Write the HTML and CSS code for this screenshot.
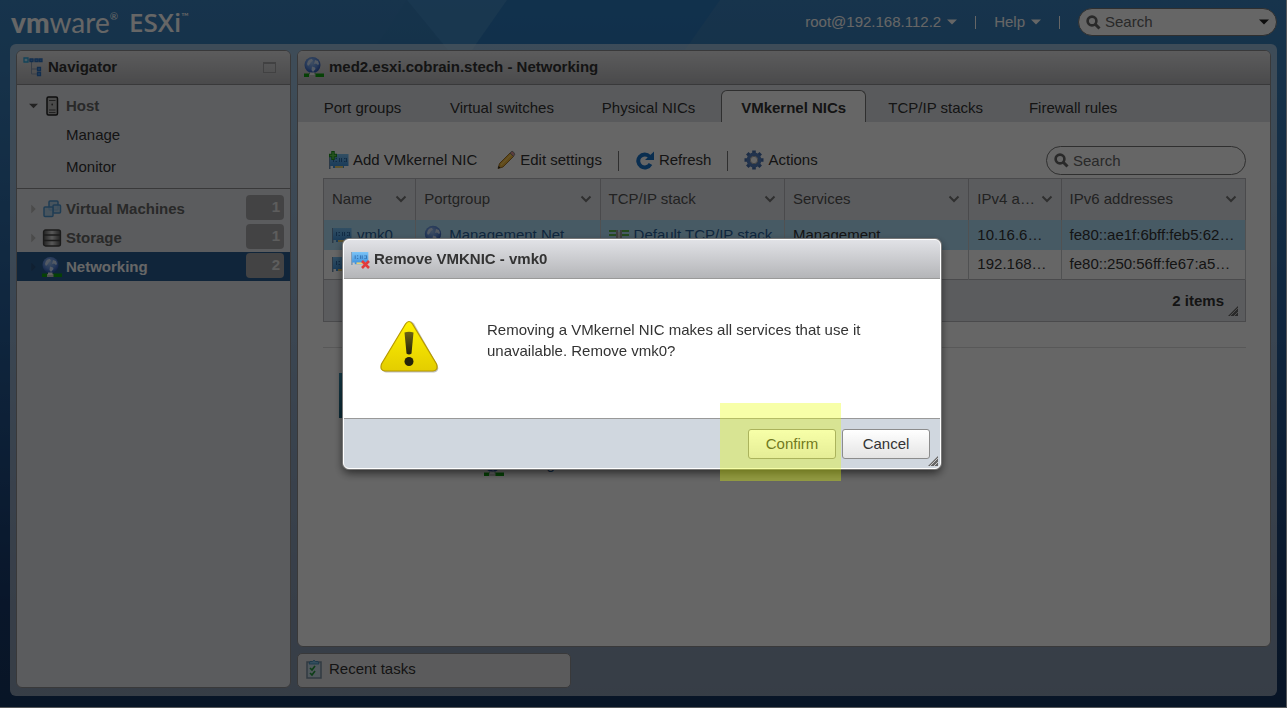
FILE: index.html
```html
<!DOCTYPE html>
<html lang="en">
<head>
<meta charset="utf-8">
<title>VMware ESXi</title>
<link rel="stylesheet" href="styles.css">
</head>
<body>
<svg class="sprites" aria-hidden="true">
  <defs>
    <linearGradient id="g-card" x1="0" y1="0" x2="0" y2="1"><stop offset="0" stop-color="#7cc4f7"/><stop offset="1" stop-color="#3a8fdc"/></linearGradient>
    <radialGradient id="g-globe" cx=".45" cy=".35" r=".65"><stop offset="0" stop-color="#9fc4f6"/><stop offset=".6" stop-color="#5f8fe0"/><stop offset="1" stop-color="#2c55b4"/></radialGradient>
    <linearGradient id="g-disk" x1="0" y1="0" x2="1" y2="0"><stop offset="0" stop-color="#555"/><stop offset=".5" stop-color="#ddd"/><stop offset="1" stop-color="#555"/></linearGradient>
    <linearGradient id="g-warn" x1="0" y1="0" x2="0" y2="1"><stop offset="0" stop-color="#fff200"/><stop offset="1" stop-color="#e3cd00"/></linearGradient>
    <linearGradient id="g-mark" x1="0" y1="0" x2="0" y2="1"><stop offset="0" stop-color="#6c6414"/><stop offset="1" stop-color="#24220a"/></linearGradient>
  </defs>
  <symbol id="i-globe" viewBox="0 0 20 20">
    <circle cx="9" cy="9" r="8.200" fill="url(#g-globe)"/>
    <path d="M4 5q2-2.500 4-2l1 2-2 1-1 2-2 2-1-2zM12 4l3 1 1 3-1 1-2-1.500-2 .5zM9 10.500l3 1 .5 1.500-2.500 3-1.500-2z" fill="#cfe1fa"/>
  </symbol>
  <symbol id="i-net" viewBox="0 0 20 20">
    <circle cx="8.500" cy="8" r="8" fill="url(#g-globe)"/>
    <path d="M4 4q2-2.500 4-2l1 2-2 1-1 2-2 2-1-2zM11 3l3 1 1 3-1 1-2-1.500-2 .5zM8 9.500l3 1 .5 1.500-2.500 3-1.500-2z" fill="#cfe1fa"/>
    <path d="M0 16.500h20v3.500H0z" fill="#0fa30f"/><path d="M5 17h6.500v3H5z" fill="#c5c5c5"/><path d="M6 15.500h4.500v2.500H6z" fill="#f2f2f2"/>
  </symbol>
  <symbol id="i-nic" viewBox="0 0 20 16">
    <path d="M0 1h1.500v15H0z" fill="#6e8fae"/><path d="M1 1h18.500v12H15v2H4v-2H1z" fill="url(#g-card)"/><path d="M6 13h8v2H6z" fill="#e9cf73"/>
    <path d="M4.500 5v4M6.500 8.500h1.500M6.500 5.500h1.500M10.500 5v4M12.500 5v4M15 5.500h1.500M15 8.500h1.500M17.500 5v4" fill="none" stroke="#2f6cab" stroke-width="1"/>
  </symbol>
  <symbol id="i-stack" viewBox="0 0 20 12">
    <path d="M0 2h7M0 6h7M0 10h7M13 2h7M13 6h7M13 10h7" stroke="#5cb84c" stroke-width="2"/><path d="M7 1h2v10H7zM11 1h2v10h-2z" fill="#999"/><path d="M9 3h2v6H9z" fill="#ccc"/>
  </symbol>
  <symbol id="i-search" viewBox="0 0 15 15">
    <circle cx="6" cy="6" r="4.400" fill="none" stroke="currentColor" stroke-width="2.600"/><path d="M9 9l4.500 4.500" stroke="currentColor" stroke-width="3"/>
  </symbol>
  <symbol id="i-chev" viewBox="0 0 12 8"><path d="M1.500 1.500l4.500 4.500 4.500-4.500" fill="none" stroke="currentColor" stroke-width="2"/></symbol>
  <symbol id="i-caret" viewBox="0 0 10 6"><path d="M0 .5h10L5 5.500z" fill="currentColor"/></symbol>
  <symbol id="i-grip" viewBox="0 0 10 10"><path d="M10 0v10H0z" fill="#666"/><path d="M2 10l8-8M6 10l4-4" stroke="#ddd" stroke-width=".8"/></symbol>
</svg>

<div class="page">
  <svg class="facets" width="800" height="50" aria-hidden="true">
    <path d="M407 0h100l-35 50h-24z" fill="#4693d0" fill-opacity=".5"/>
    <path d="M507 0h213l-35 50H472z" fill="#1c72be" fill-opacity=".45"/>
    <path d="M407 0l41 50h-75z" fill="#337eb8" fill-opacity=".3"/>
  </svg>
  <header class="topbar">
    <h1 class="logo"><span class="logo-vm">vm</span><span class="logo-ware">ware</span><sup class="logo-reg">®</sup> <span class="logo-esxi">ESXi</span><sup class="logo-tm">™</sup></h1>
    <nav class="top-menu">
      <button class="top-link" type="button">root@192.168.112.2 <svg class="caret"><use href="#i-caret"/></svg></button>
      <span class="top-sep"></span>
      <button class="top-link" type="button">Help <svg class="caret"><use href="#i-caret"/></svg></button>
      <span class="top-sep"></span>
      <label class="search search-top"><svg class="search-icon"><use href="#i-search"/></svg><input type="search" placeholder="Search" aria-label="Search"><svg class="caret"><use href="#i-caret"/></svg></label>
    </nav>
  </header>

  <div class="frame">
    <aside class="panel navigator">
      <div class="panel-head">
        <svg class="icon" viewBox="0 0 20 20"><path d="M3 3h15M8.500 4v13h6M8.500 12h6" fill="none" stroke="#8d9db5"/><path d="M1 1h4v4H1z" fill="#b8e4fa" stroke="#2fa8de" stroke-width="1.300"/><g fill="#5f9be0" stroke="#2f74c4" stroke-width="1.300"><path d="M7 2h3v2.500H7zM12 2h3v2.500h-3zM16.500 2h2.500v2.500h-2.500zM14.500 10.500h3v3h-3zM14.500 15.500h3v3h-3z"/></g></svg>
        <h2>Navigator</h2>
        <button class="collapse" type="button" aria-label="Collapse"></button>
      </div>
      <ul class="tree">
        <li><a class="node" href="#"><svg class="arrow"><use href="#i-caret"/></svg><svg class="icon" viewBox="0 0 20 20"><rect x="5" y="1" width="10.500" height="18" rx="1.500" fill="#bbb" stroke="#222" stroke-width="1.500"/><path d="M7 4.500h6.500M7 14h6.500M7 16.500h6.500" stroke="#555"/><circle cx="10.200" cy="8.500" r=".9" fill="#444"/></svg><span>Host</span></a></li>
        <li><a class="leaf" href="#">Manage</a></li>
        <li><a class="leaf" href="#">Monitor</a></li>
      </ul>
      <ul class="tree tree-inventory">
        <li><a class="node" href="#"><svg class="arrow shut"><use href="#i-caret"/></svg><svg class="icon" viewBox="0 0 20 20"><g fill="#a9cde8" fill-opacity=".8" stroke="#4f97cf" stroke-width="1.500"><rect x="7" y="2" width="9" height="9" rx="1"/><rect x="11" y="6" width="7.500" height="8" rx="1"/><rect x="2" y="8" width="9" height="9.500" rx="1"/></g></svg><span>Virtual Machines</span><b class="badge">1</b></a></li>
        <li><a class="node" href="#"><svg class="arrow shut"><use href="#i-caret"/></svg><svg class="icon" viewBox="0 0 20 20"><rect x="1.500" y="2" width="17" height="16" rx="2" fill="url(#g-disk)" stroke="#444" stroke-width="1.300"/><path d="M2 7h16M2 12.500h16" stroke="#444" stroke-width="1.300"/></svg><span>Storage</span><b class="badge">1</b></a></li>
        <li><a class="node selected" href="#"><svg class="arrow shut"><use href="#i-caret"/></svg><svg class="icon"><use href="#i-net"/></svg><span>Networking</span><b class="badge">2</b></a></li>
      </ul>
    </aside>

    <div class="column">
      <main class="panel content">
        <div class="panel-head">
          <svg class="icon"><use href="#i-net"/></svg>
          <h2>med2.esxi.cobrain.stech - Networking</h2>
        </div>
        <div class="tabs" role="tablist">
          <button class="tab" role="tab" data-label="Port groups">Port groups</button>
          <button class="tab" role="tab" data-label="Virtual switches">Virtual switches</button>
          <button class="tab" role="tab" data-label="Physical NICs">Physical NICs</button>
          <button class="tab active" role="tab" aria-selected="true" data-label="VMkernel NICs">VMkernel NICs</button>
          <button class="tab" role="tab" data-label="TCP/IP stacks">TCP/IP stacks</button>
          <button class="tab" role="tab" data-label="Firewall rules">Firewall rules</button>
        </div>
        <div class="tab-body">
          <div class="toolbar">
            <button class="tool" type="button"><svg class="icon" viewBox="0 0 20 20"><use href="#i-nic" y="3" width="20" height="16"/><path d="M4 1v9M0 5.500h8" stroke="#1f961f" stroke-width="3.500"/><path d="M4 2v7M1 5.500h6" stroke="#5fd04f" stroke-width="1.500"/></svg>Add VMkernel NIC</button>
            <button class="tool tool-edit" type="button"><svg class="icon" viewBox="0 0 20 20"><path d="M2 18.500l1.500-5L14 3l3.500 3.500L7 17z" fill="#f0b73c" stroke="#8a5a14" stroke-width=".8"/><path d="M5 15L15.500 4.500" stroke="#ffd468" stroke-width="1.200"/><path d="M14 3l2-1.800q1.500 0 2.800 3L17.500 6.500z" fill="#e39a9a" stroke="#777" stroke-width=".8"/><path d="M2 18.500l.7-2.500 1.800 1.800z" fill="#222"/></svg>Edit settings</button>
            <span class="tool-sep"></span>
            <button class="tool" type="button"><svg class="icon" viewBox="0 0 20 20"><path d="M15.500 14a6.500 6.500 0 1 1-1-7.500" fill="none" stroke="#1a73c9" stroke-width="4"/><path d="M19 1.500v8.500h-9z" fill="#1a73c9"/></svg>Refresh</button>
            <span class="tool-sep"></span>
            <button class="tool" type="button"><svg class="icon" viewBox="0 0 20 20"><g stroke="#4870ae" stroke-width="3.600"><path d="M10 .5v19M.5 10h19M3.300 3.300l13.400 13.400M16.700 3.300L3.300 16.700"/></g><circle cx="10" cy="10" r="5.400" fill="#fff" stroke="#5580c0" stroke-width="4"/><circle cx="10" cy="10" r="3.700" fill="#fff" stroke="#aaa" stroke-width="1"/></svg>Actions</button>
            <label class="search search-grid"><svg class="search-icon"><use href="#i-search"/></svg><input type="search" placeholder="Search" aria-label="Search NICs"></label>
          </div>
          <table class="grid">
            <colgroup><col class="c-s"><col class="c-l"><col class="c-l"><col class="c-l"><col class="c-s"><col class="c-l"></colgroup>
            <thead>
              <tr>
                <th><div class="th">Name<svg class="chev"><use href="#i-chev"/></svg></div></th>
                <th><div class="th">Portgroup<svg class="chev"><use href="#i-chev"/></svg></div></th>
                <th><div class="th">TCP/IP stack<svg class="chev"><use href="#i-chev"/></svg></div></th>
                <th><div class="th">Services<svg class="chev"><use href="#i-chev"/></svg></div></th>
                <th><div class="th">IPv4 a…<svg class="chev"><use href="#i-chev"/></svg></div></th>
                <th><div class="th">IPv6 addresses<svg class="chev"><use href="#i-chev"/></svg></div></th>
              </tr>
            </thead>
            <tbody>
              <tr class="picked">
                <td><a class="cell" href="#"><svg class="nic"><use href="#i-nic"/></svg>vmk0</a></td>
                <td><a class="cell" href="#"><svg class="icon"><use href="#i-globe"/></svg>Management Net</a></td>
                <td><a class="cell" href="#"><svg class="stack"><use href="#i-stack"/></svg>Default TCP/IP stack</a></td>
                <td>Management</td><td>10.16.6…</td><td>fe80::ae1f:6bff:feb5:62…</td>
              </tr>
              <tr>
                <td><a class="cell" href="#"><svg class="nic"><use href="#i-nic"/></svg></a></td>
                <td></td><td></td><td></td><td>192.168…</td><td>fe80::250:56ff:fe67:a5…</td>
              </tr>
            </tbody>
          </table>
          <div class="grid-foot"><b>2 items</b><svg class="grip"><use href="#i-grip"/></svg></div>
          <section class="detail">
            <div class="detail-art"></div>
            <a class="cell detail-link" href="#"><svg class="icon"><use href="#i-net"/></svg>Management</a>
          </section>
        </div>
      </main>
      <button class="tasks" type="button"><svg class="icon" viewBox="0 0 20 20"><rect x="3" y="3" width="14" height="16" fill="#c9dce8" stroke="#7b91a2" stroke-width="1.500"/><path d="M5 5l1-2.500h2.500Q10 0 11.500 2.500H14L15 5z" fill="#7fc4e8" stroke="#3c86b4" stroke-width=".8"/><path d="M6 9l2 2 3-4M6 14l2 2 3-4" fill="none" stroke="#239a3c" stroke-width="1.700"/></svg>Recent tasks</button>
    </div>
  </div>
</div>

<div class="backdrop">
  <section class="dialog" role="dialog" aria-modal="true" aria-labelledby="dlg-title">
    <header class="dialog-head">
      <svg class="icon" viewBox="0 0 20 20"><use href="#i-nic" y="2" width="20" height="14"/><path d="M12 12l7 7M19 12l-7 7" stroke="#e23b3b" stroke-width="2.600"/></svg>
      <h2 id="dlg-title">Remove VMKNIC - vmk0</h2>
    </header>
    <div class="dialog-body">
      <svg class="warning" viewBox="0 0 60 54" role="img" aria-label="Warning">
        <path d="M26 3.500Q30-1 34 3.500L57.500 45Q60 51 54 52.500H6Q0 51 2.500 45Z" fill="#000" fill-opacity=".25"/>
        <path d="M25.500 4Q29-1 32.500 4L56.500 44Q58.500 50.500 53 51H5Q-.5 50.500 1.500 44Z" fill="url(#g-warn)" stroke="#b79a00" stroke-width="1.200"/>
        <path d="M24.500 12.500q4.500-1.500 9 0l-2 21q-2.500 2-5 0z" fill="url(#g-mark)"/><circle cx="29" cy="41.500" r="4.500" fill="#24220a"/>
      </svg>
      <p>Removing a VMkernel NIC makes all services that use it unavailable. Remove vmk0?</p>
    </div>
    <footer class="dialog-foot">
      <div class="confirm"><button class="btn" type="button">Confirm</button><span class="highlight"></span></div>
      <button class="btn" type="button">Cancel</button>
      <svg class="grip"><use href="#i-grip"/></svg>
    </footer>
  </section>
</div>
</body>
</html>
```

FILE: styles.css
```css
* { box-sizing: border-box; }
body {
  margin: 0;
  font: 15px/20px "Liberation Sans", Arial, sans-serif;
  color: #333;
}
h1, h2, p, ul { margin: 0; padding: 0; font-size: inherit; }
ul { list-style: none; }
a { color: inherit; text-decoration: none; }
button { border: 0; background: none; padding: 0; font: inherit; color: inherit; }
.sprites { position: absolute; width: 0; height: 0; }
.icon { width: 20px; height: 20px; flex: none; }

.page {
  position: relative;
  min-height: 100vh;
  display: flex;
  flex-direction: column;
  background: linear-gradient(#3a82be, #387db8 10%, #275f9c 45%, #17396a 85%, #163560);
  border-right: 1px solid #d8dce4;
  border-bottom: 1px solid #d8dce4;
}
.facets { position: absolute; top: 0; left: 0; }

.topbar {
  position: relative;
  height: 44px;
  padding: 0 9px 0 11px;
  display: flex;
  align-items: center;
  justify-content: space-between;
  color: #fff;
}
.logo { display: flex; align-items: center; font: 28px/32px Lato, sans-serif; }
.logo sup { align-self: flex-start; font-size: 10px; line-height: 20px; }
.logo-vm { font-weight: 900; }
.logo-esxi { font: 26px/32px "Open Sans", sans-serif; font-weight: 600; margin-left: 11px; }
.top-menu { display: flex; align-items: center; }
.top-link { display: flex; align-items: center; gap: 6px; }
.caret { width: 10px; height: 6px; flex: none; }
.top-sep { width: 1px; height: 13px; margin: 0 18px; background: #fff; }

.search {
  display: flex;
  align-items: center;
  gap: 4px;
  padding: 0 7px;
  border: 1px solid #777;
  border-radius: 15px;
  background: #fff;
  color: #666;
}
.search input {
  flex: 1;
  min-width: 0;
  border: 0;
  padding: 0;
  background: none;
  font: inherit;
  color: #333;
}
.search input::placeholder { color: #666; opacity: 1; }
.search-icon { width: 15px; height: 15px; flex: none; }
.search-top { width: 199px; height: 28px; }
.search-top .caret { color: #222; }
.search-grid { width: 200px; height: 29px; margin-left: auto; }

.frame {
  position: relative;
  flex: 1;
  display: flex;
  gap: 6px;
  margin: 0 9px 11px 10px;
  padding: 6px 6px 8px;
  border-radius: 6px;
  background: rgba(255, 255, 255, .5);
}
.panel {
  border: 1px solid #8e8e92;
  border-radius: 6px;
  overflow: hidden;
}
.navigator { width: 275px; flex: none; background: #e4e6eb; }
.column { flex: 1; min-width: 0; display: flex; flex-direction: column; gap: 6px; }
.content { flex: 1; background: #fff; }

.panel-head {
  display: flex;
  align-items: center;
  gap: 5px;
  height: 34px;
  padding: 0 14px 1px 6px;
  background: linear-gradient(#e6e6e8, #b9b9bc);
  border-bottom: 1px solid #8e8e92;
}
.collapse {
  width: 13px;
  height: 11px;
  margin-left: auto;
  border: 1px solid #a2a2a5;
  border-top-width: 2px;
}

.tree { padding: 6px 0 4px; }
.tree-inventory { padding-top: 5px; border-top: 1px solid #8e8e92; }
.node { display: flex; align-items: center; height: 29px; padding: 0 6px 0 12px; font-weight: bold; color: #666; }
.arrow { width: 9px; height: 6px; margin-right: 4px; flex: none; color: #555; }
.arrow.shut { transform: rotate(-90deg); color: #bbb; }
.node .icon { margin-right: 4px; }
.node.selected { background: #2a5d92; color: #fff; }
.node.selected .arrow { color: #28507c; }
.leaf { display: block; padding: 5px 0 7px 49px; }
.badge {
  width: 38px;
  height: 25px;
  margin: 0 0 3px auto;
  padding-right: 4px;
  border-radius: 4px;
  background: #a8a8aa;
  color: #e8e8e8;
  text-align: right;
  line-height: 24px;
}

.tabs { display: flex; align-items: flex-end; height: 37px; padding: 5px 2px 0; background: #dfe2e7; }
.tab { height: 32px; padding: 3px 20px 0; text-align: center; line-height: 20px; }
.tab::after { content: attr(data-label); display: block; height: 0; overflow: hidden; font-weight: bold; visibility: hidden; }
.tab.active {
  margin-left: 3px;
  padding: 2px 19px 0;
  border: 1px solid #777;
  border-bottom: 0;
  border-radius: 6px 6px 0 0;
  background: #fff;
  font-weight: bold;
}
.tab-body { padding: 24px 24px 0 25px; }

.toolbar { display: flex; align-items: center; height: 29px; margin-bottom: 3px; padding-left: 6px; }
.tool { display: flex; align-items: center; gap: 4px; margin-bottom: 1px; }
.tool-edit { margin-left: 19px; }
.tool-sep { width: 1px; height: 20px; margin: 0 16px; background: #777; }

.grid { width: 100%; table-layout: fixed; border-collapse: collapse; border: 1px solid #b8babf; }
.c-s { width: 10%; }
.c-l { width: 20%; }
.grid th { height: 41px; padding: 0 8px; background: #e4e6eb; border-right: 1px solid #b8babf; font-weight: normal; color: #555; }
.th { display: flex; align-items: center; justify-content: space-between; white-space: nowrap; }
.chev { width: 12px; height: 8px; color: #777; flex: none; }
.grid td { height: 30px; padding: 0 8px; border-right: 1px solid #c8cace; white-space: nowrap; overflow: hidden; }
.picked { background: #b2e0fa; }
.cell { display: flex; align-items: center; gap: 5px; color: #27609a; }
.nic { width: 20px; height: 16px; flex: none; }
.stack { width: 20px; height: 12px; flex: none; }
.grid-foot {
  position: relative;
  height: 42px;
  padding: 11px 21px;
  border: 1px solid #b8babf;
  border-top: 0;
  background: #e4e6eb;
  text-align: right;
}
.grip { position: absolute; right: 7px; bottom: 5px; width: 10px; height: 10px; }
.detail { margin-top: 25px; padding: 25px 16px 0; border-top: 1px solid #ddd; }
.detail-art { width: 60px; height: 45px; background: linear-gradient(#3c96b8, #1e6a86); }
.detail-link { align-items: flex-start; margin: 38px 0 0 145px; line-height: 16px; }

.tasks {
  display: flex;
  align-items: center;
  gap: 5px;
  width: 274px;
  height: 35px;
  padding: 0 6px 3px;
  border: 1px solid #8e8e92;
  border-radius: 5px;
  background: #e4e4e6;
}

.backdrop {
  position: fixed;
  inset: 0;
  display: flex;
  align-items: center;
  justify-content: center;
  padding: 0 3px 0 0;
  background: rgba(0, 0, 0, .6);
}
.dialog {
  width: 598px;
  max-width: 100%;
  border: 1px solid #fff;
  border-radius: 6px;
  background: #fff;
  box-shadow: 0 0 0 1px #777, 0 4px 10px rgba(0, 0, 0, .6);
}
.dialog-head {
  display: flex;
  align-items: center;
  gap: 4px;
  height: 39px;
  padding: 0 6px;
  border-bottom: 1px solid #999;
  border-radius: 5px 5px 0 0;
  background: linear-gradient(#e1e2e6, #b4b5b8);
}
.dialog-body { display: flex; align-items: flex-start; gap: 47px; height: 139px; padding: 40px 60px 0 36px; }
.warning { width: 60px; height: 54px; margin-top: 1px; flex: none; }
.dialog-body p { line-height: 21px; }
.dialog-foot {
  position: relative;
  display: flex;
  justify-content: flex-end;
  gap: 6px;
  padding: 10px 10px 9px;
  border-top: 1px solid #999;
  border-radius: 0 0 5px 5px;
  background: #d0d7df;
}
.dialog-foot .grip { right: 2px; bottom: 2px; }
.btn {
  width: 88px;
  height: 30px;
  border: 1px solid #8c8c8c;
  border-radius: 3px;
  background: linear-gradient(#fff, #e4e4e4);
}
.confirm { position: relative; }
.highlight {
  position: absolute;
  inset: -26px -5px -22px -28px;
  background: rgba(232, 255, 0, .34);
  pointer-events: none;
}
```
